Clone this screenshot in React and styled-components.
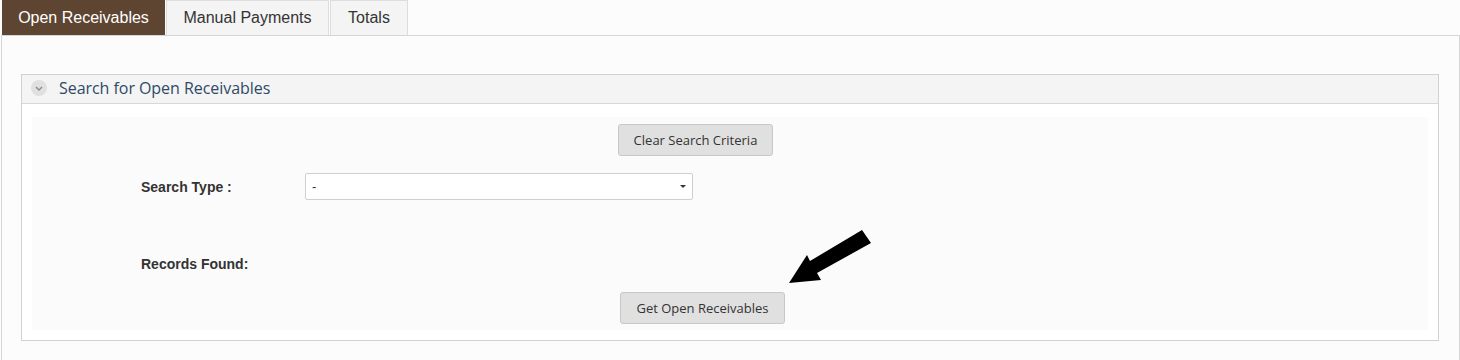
import React from "react";
import styled, { createGlobalStyle } from "styled-components";

const GlobalStyle = createGlobalStyle`
  html, body {
    margin: 0;
    padding: 0;
    background: #fcfcfc;
    font-family: "Liberation Sans", Arial, sans-serif;
  }
`;

const Page = styled.div`
  width: 1460px;
  height: 360px;
  overflow: hidden;
  position: relative;
`;

const TabBar = styled.div`
  display: flex;
  padding-left: 2px;
  height: 36px;
`;

const Tab = styled.div`
  display: flex;
  align-items: center;
  justify-content: center;
  width: ${(p) => p.$width}px;
  height: 35px;
  box-sizing: border-box;
  font-size: 16px;
  color: ${(p) => (p.$active ? "#ffffff" : "#333333")};
  background: ${(p) => (p.$active ? "#5d4532" : "#f4f4f4")};
  border: 1px solid ${(p) => (p.$active ? "#5d4532" : "#dddddd")};
  border-bottom: none;
  margin-right: 1px;
  padding-bottom: 1px;
`;

const Panel = styled.div`
  margin-top: -1px;
  margin-left: 1px;
  width: 1459px;
  box-sizing: border-box;
  border: 1px solid #d6d6d6;
  border-bottom: none;
  padding: 38px 20px 40px 19px;
  background: #fcfcfc;
`;

const Box = styled.div`
  border: 1px solid #d2d2d2;
  background: #ffffff;
`;

const BoxHeader = styled.div`
  display: flex;
  align-items: center;
  gap: 12px;
  height: 28px;
  padding-left: 9px;
  background: #f4f4f4;
  border-bottom: 1px solid #d8d8d8;
`;

const Toggle = styled.span`
  display: flex;
  align-items: center;
  justify-content: center;
  width: 16px;
  height: 16px;
  border-radius: 50%;
  background: #e0e0e0;
  margin-top: -2px;
`;

const HeaderTitle = styled.span`
  font-family: "Open Sans", "Noto Sans", sans-serif;
  font-size: 16px;
  color: #2f4a66;
  letter-spacing: -0.05px;
  margin-top: -2px;
`;

const BoxBody = styled.div`
  padding: 13px 10px 10px 10px;
`;

const Content = styled.div`
  background: #fbfbfb;
  height: 213px;
  display: flex;
  flex-direction: column;
  padding-top: 7px;
  box-sizing: border-box;
`;

const ButtonRow = styled.div`
  display: flex;
  padding-left: ${(p) => p.$left}px;
  margin-top: ${(p) => p.$top || 0}px;
`;

const Button = styled.button`
  font-family: "Open Sans", "Noto Sans", sans-serif;
  font-size: 13px;
  color: #333333;
  background: #e0e0e0;
  border: 1px solid #c8c8c8;
  border-radius: 3px;
  height: 32px;
  width: ${(p) => p.$width}px;
  padding: 0;
  cursor: pointer;
`;

const FieldRow = styled.div`
  display: grid;
  grid-template-columns: 164px 388px;
  align-items: center;
  padding-left: 109px;
  margin-top: ${(p) => p.$top}px;
  height: ${(p) => p.$height || 27}px;
`;

const Label = styled.span`
  font-size: 14px;
  font-weight: bold;
  color: #333333;
`;

const Select = styled.div`
  display: flex;
  align-items: center;
  justify-content: space-between;
  height: 27px;
  box-sizing: border-box;
  padding: 0 6px 0 6px;
  background: #ffffff;
  border: 1px solid #cfcfcf;
  border-radius: 2px;
  font-size: 13px;
  color: #333333;
`;

const Caret = styled.span`
  width: 0;
  height: 0;
  border-left: 3px solid transparent;
  border-right: 3px solid transparent;
  border-top: 3px solid #333333;
`;

const Arrow = styled.svg`
  position: absolute;
  left: 780px;
  top: 225px;
`;

export default function App() {
  return (
    <Page>
      <GlobalStyle />
      <TabBar>
        <Tab $active $width={163}>Open Receivables</Tab>
        <Tab $width={163}>Manual Payments</Tab>
        <Tab $width={78}>Totals</Tab>
      </TabBar>
      <Panel>
        <Box>
          <BoxHeader>
            <Toggle>
              <svg width="8" height="5" viewBox="0 0 8 5">
                <path d="M1 1 L4 4 L7 1" fill="none" stroke="#8a8a8a" strokeWidth="1.4" />
              </svg>
            </Toggle>
            <HeaderTitle>Search for Open Receivables</HeaderTitle>
          </BoxHeader>
          <BoxBody>
            <Content>
              <ButtonRow $left={586}>
                <Button $width={155}>Clear Search Criteria</Button>
              </ButtonRow>
              <FieldRow $top={17}>
                <Label>Search Type :</Label>
                <Select>
                  <span>-</span>
                  <Caret />
                </Select>
              </FieldRow>
              <FieldRow $top={51} $height={26}>
                <Label>Records Found:</Label>
              </FieldRow>
              <ButtonRow $left={588} $top={15}>
                <Button $width={165}>Get Open Receivables</Button>
              </ButtonRow>
            </Content>
          </BoxBody>
        </Box>
      </Panel>
      <Arrow width="100" height="70" viewBox="780 225 100 70">
        <polygon
          points="789,283 807,255 810,261 862,230 871,243 817,273 821,280"
          fill="#000"
        />
      </Arrow>
    </Page>
  );
}
